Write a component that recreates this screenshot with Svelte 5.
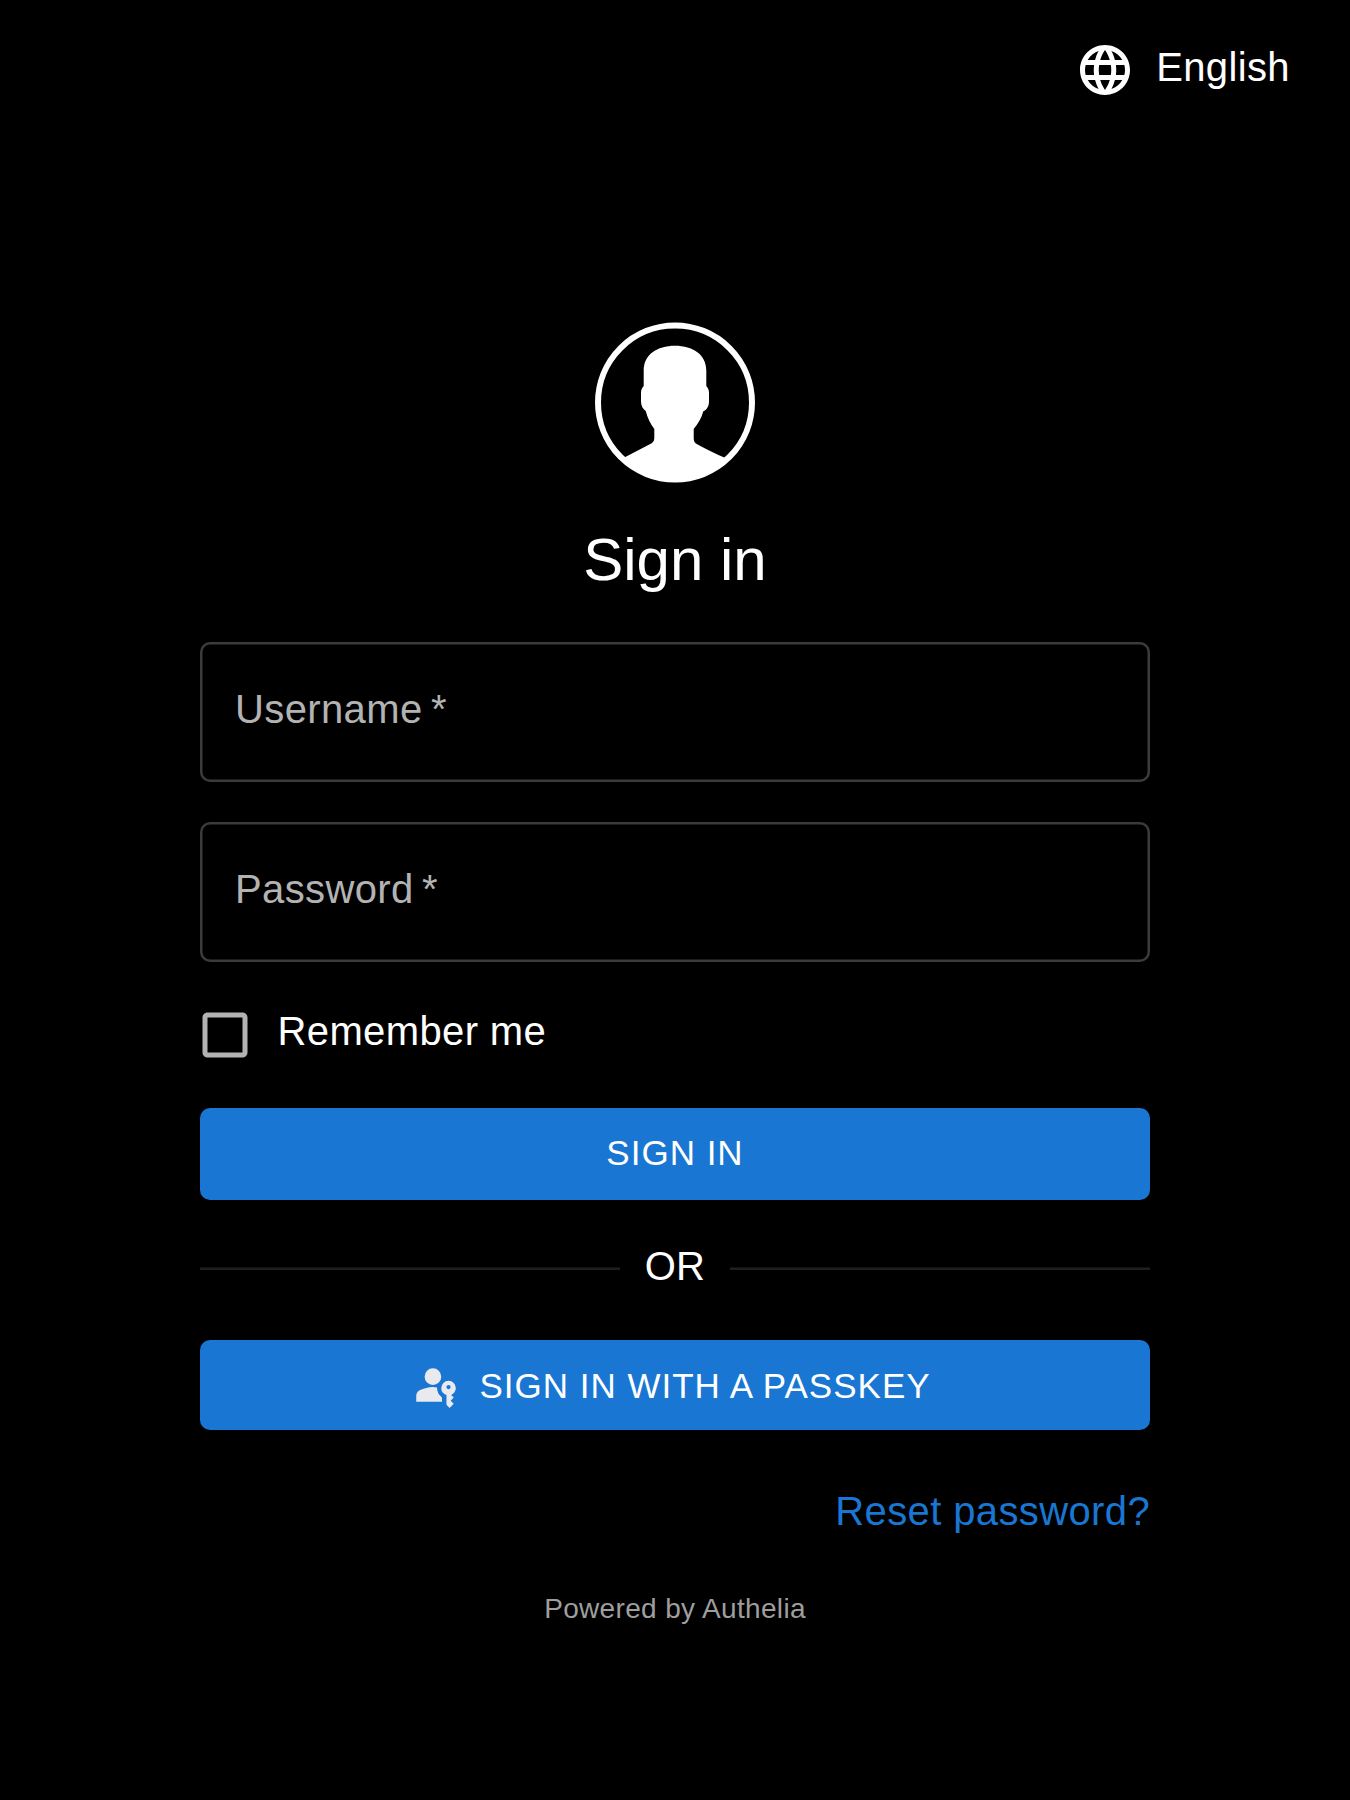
<script>
  let username = $state('');
  let password = $state('');
  let remember = $state(false);
</script>

<div class="page">
  <header class="topbar">
    <button class="language" type="button">
      <svg class="globe" viewBox="0 0 24 24" aria-hidden="true">
        <path d="M11.99 2C6.47 2 2 6.48 2 12s4.47 10 9.99 10C17.52 22 22 17.52 22 12S17.52 2 11.99 2m6.93 6h-2.95c-.32-1.25-.78-2.45-1.38-3.56 1.84.63 3.37 1.91 4.33 3.56M12 4.04c.83 1.2 1.48 2.53 1.91 3.96h-3.82c.43-1.43 1.08-2.76 1.91-3.96M4.26 14C4.1 13.36 4 12.69 4 12s.1-1.36.26-2h3.38c-.08.66-.14 1.32-.14 2s.06 1.34.14 2zm.82 2h2.95c.32 1.25.78 2.45 1.38 3.56-1.84-.63-3.37-1.9-4.33-3.56m2.95-8H5.08c.96-1.66 2.49-2.93 4.33-3.56C8.81 5.55 8.35 6.75 8.03 8M12 19.96c-.83-1.2-1.48-2.53-1.91-3.96h3.82c-.43 1.43-1.08 2.76-1.91 3.96M14.34 14H9.66c-.09-.66-.16-1.32-.16-2s.07-1.35.16-2h4.68c.09.65.16 1.32.16 2s-.07 1.34-.16 2m.25 5.56c.6-1.11 1.06-2.31 1.38-3.56h2.95c-.96 1.65-2.49 2.93-4.33 3.56M16.36 14c.08-.66.14-1.32.14-2s-.06-1.34-.14-2h3.38c.16.64.26 1.31.26 2s-.1 1.36-.26 2z" />
      </svg>
      <span>English</span>
    </button>
  </header>

  <main class="portal">
    <svg class="avatar" viewBox="0 -0.5 160 160" aria-hidden="true">
      <circle cx="80" cy="80" r="77" />
      <path d="M80 23.2C98 23.2 111.3 32 111.3 48V63.5C113 65.5 114 67.5 114 70V79C114 84 111.5 87.5 108.3 88.8C106.5 95.5 103 101.5 98.7 106.5V115.5C98.7 118.5 99.5 120.2 101.7 121.5C110 126.3 120 131 129.7 135.2L132 136A76.5 76.5 0 0 1 28 136L30.3 134.5L56.7 120.8C58.8 119.2 59.3 117.5 59.3 115V106.5C55.5 101.5 52.5 95.5 50.7 88.5C48 86.5 46 83.5 46 79V70C46 67.5 47 65.5 48.7 63.5V48C48.7 32 62 23.2 80 23.2Z" />
    </svg>
    <h1>Sign in</h1>

    <form onsubmit={(e) => e.preventDefault()}>
      <label class="field">
        {#if !username}<span>Username&thinsp;*</span>{/if}
        <input type="text" bind:value={username} aria-label="Username" />
      </label>
      <label class="field">
        {#if !password}<span>Password&thinsp;*</span>{/if}
        <input type="password" bind:value={password} aria-label="Password" />
      </label>

      <label class="remember">
        <input type="checkbox" bind:checked={remember} />
        <svg viewBox="0 0 24 24" aria-hidden="true">
          {#if remember}
            <path d="M19 3H5c-1.11 0-2 .9-2 2v14c0 1.1.89 2 2 2h14c1.11 0 2-.9 2-2V5c0-1.1-.89-2-2-2zm-9 14l-5-5 1.41-1.41L10 14.17l7.59-7.59L19 8l-9 9z" />
          {:else}
            <path d="M19 5v14H5V5h14m0-2H5c-1.1 0-2 .9-2 2v14c0 1.1.9 2 2 2h14c1.1 0 2-.9 2-2V5c0-1.1-.9-2-2-2z" />
          {/if}
        </svg>
        <span>Remember me</span>
      </label>

      <button class="action" type="submit"><span>Sign in</span></button>

      <div class="divider"><span>OR</span></div>

      <button class="action passkey" type="button">
        <svg viewBox="0 -960 960 960" aria-hidden="true">
          <path d="M120-160v-112q0-34 17.5-62.5T184-378q62-31 126-46.5T440-440q20 0 40 1.5t40 4.5q-4 58 21 109.5t73 84.5v80H120ZM760-40l-60-60v-186q-44-13-72-49.5T600-420q0-58 41-99t99-41q58 0 99 41t41 99q0 45-25.5 80T790-290l50 50-60 60 60 60-80 80ZM440-480q-66 0-113-47t-47-113q0-66 47-113t113-47q66 0 113 47t47 113q0 66-47 113t-113 47Zm300 80q17 0 28.5-11.5T780-440q0-17-11.5-28.5T740-480q-17 0-28.5 11.5T700-440q0 17 11.5 28.5T740-400Z" />
        </svg>
        <span>Sign in with a passkey</span>
      </button>
    </form>

    <a class="reset" href="#reset">Reset password?</a>
    <a class="powered" href="#about">Powered by Authelia</a>
  </main>
</div>

<style>
  :global(body) {
    background: #000;
  }

  .page {
    box-sizing: border-box;
    min-height: 1800px;
    background: #000;
    color: #fff;
    font-family: 'Liberation Sans', Arial, sans-serif;
    font-size: 40px;
    line-height: 60px;
    letter-spacing: 0.375px;
  }

  button {
    border: 0;
    padding: 0;
    color: inherit;
    font: inherit;
    letter-spacing: inherit;
    cursor: pointer;
  }

  .topbar {
    display: flex;
    justify-content: flex-end;
    height: 140px;
    padding-right: 60px;
  }

  .language {
    display: flex;
    align-items: center;
    gap: 21px;
    background: none;
  }

  .language span {
    padding-bottom: 8px;
    transform: translateY(0.5px);
  }

  .globe {
    width: 60px;
    height: 60px;
    fill: #fff;
  }

  .portal {
    display: flex;
    flex-direction: column;
    width: 950px;
    margin: 0 auto;
    padding-top: 182px;
  }

  .avatar {
    align-self: center;
    width: 160px;
    height: 160px;
    overflow: visible;
    fill: #fff;
  }

  .avatar circle {
    fill: none;
    stroke: #fff;
    stroke-width: 6;
  }

  h1 {
    margin: 38px 0 0;
    font-size: 60px;
    font-weight: 400;
    line-height: 80px;
    letter-spacing: 0;
    text-align: center;
  }

  form {
    display: flex;
    flex-direction: column;
    margin-top: 42px;
  }

  .field {
    display: grid;
    align-items: center;
    box-sizing: border-box;
    height: 140px;
    margin-bottom: 40px;
    padding: 0 35px;
    border-radius: 10px;
    box-shadow: inset 0 0 0 2.5px #3b3b3b;
  }

  .field span,
  .field input {
    grid-area: 1 / 1;
  }

  .field span {
    padding-bottom: 6px;
    color: #b3b3b3;
  }

  .field input {
    border: 0;
    outline: 0;
    padding: 0;
    background: none;
    color: #fff;
    font: inherit;
  }

  .remember {
    display: flex;
    align-items: center;
    height: 60px;
    margin-top: 3px;
  }

  .remember input {
    width: 0;
    height: 0;
    margin: 0;
    opacity: 0;
  }

  .remember svg {
    width: 60px;
    height: 60px;
    margin: 0 22.5px 0 -5px;
    fill: #b3b3b3;
  }

  .remember span {
    padding-bottom: 8px;
  }

  .action {
    display: flex;
    align-items: center;
    justify-content: center;
    height: 92.5px;
    margin-top: 42.5px;
    border-radius: 10px;
    background: #1976d2;
    font-size: 35px;
    letter-spacing: 1px;
    text-transform: uppercase;
  }

  .action span {
    padding-bottom: 2px;
  }

  .divider {
    display: flex;
    align-items: center;
    gap: 25px;
    height: 60px;
    margin-top: 38.5px;
  }

  .divider::before,
  .divider::after {
    content: '';
    flex: 1;
    height: 2px;
    border-top: 1px solid #121212;
    background: #1f1f1f;
  }

  .divider span {
    padding-bottom: 5px;
  }

  .passkey {
    height: 90px;
    margin-top: 41.5px;
  }

  .passkey svg {
    width: 50px;
    height: 50px;
    margin: 0 19px 0 -9px;
    fill: #e8eaed;
  }

  .passkey span {
    padding: 1px 0 0;
  }

  .reset {
    align-self: flex-end;
    margin-top: 51px;
    color: #1976d2;
    text-decoration: none;
  }

  .powered {
    align-self: center;
    margin-top: 47px;
    color: #9e9e9e;
    font-size: 28px;
    line-height: 42px;
    letter-spacing: 0.34px;
    text-decoration: none;
  }
</style>
